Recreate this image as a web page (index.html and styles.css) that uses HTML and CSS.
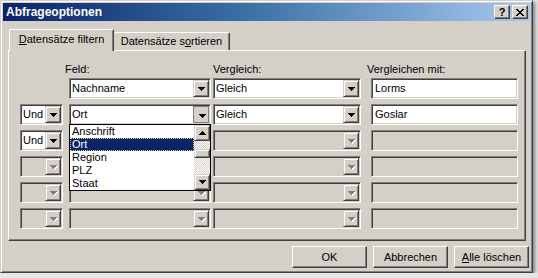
FILE: index.html
```html
<!DOCTYPE html>
<html>
<head>
    <title>Abfrageoptionen</title>
    <link rel="stylesheet" href="styles.css">
</head>
<body>
    <div class="window">
        <div class="titlebar">
            <span class="title">Abfrageoptionen</span>
            <div class="caption-btns">
                <span class="cap-btn">?</span>
                <span class="cap-btn">
                    <svg width="8" height="7" viewBox="0 0 8 7" shape-rendering="crispEdges"><path d="M0 0h2v1H0zM6 0h2v1H6zM1 1h2v1H1zM5 1h2v1H5zM2 2h4v1H2zM3 3h2v1H3zM2 4h4v1H2zM1 5h2v1H1zM5 5h2v1H5zM0 6h2v1H0zM6 6h2v1H6z" fill="#000"/></svg>
                </span>
            </div>
        </div>

        <div class="content">
            <div class="tabs">
                <div class="tab active"><u>D</u>atensätze filtern</div>
                <div class="tab">Datensätze s<u>o</u>rtieren</div>
            </div>

            <div class="panel">
                <div class="row labels">
                    <span class="c-und"></span>
                    <span class="c-feld lbl shift">Feld:</span>
                    <span class="c-verg lbl">Vergleich:</span>
                    <span class="c-wert lbl shift">Vergleichen mit:</span>
                </div>

                <!-- row 1 -->
                <div class="row">
                    <span class="c-und"></span>
                    <div class="combo c-feld"><span class="val">Nachname</span><span class="drop"><svg class="arrow" width="7" height="4" viewBox="0 0 7 4" shape-rendering="crispEdges"><path d="M0 0h7v1H0zM1 1h5v1H1zM2 2h3v1H2zM3 3h1v1H3z"/></svg></span></div>
                    <div class="combo c-verg"><span class="val">Gleich</span><span class="drop"><svg class="arrow" width="7" height="4" viewBox="0 0 7 4" shape-rendering="crispEdges"><path d="M0 0h7v1H0zM1 1h5v1H1zM2 2h3v1H2zM3 3h1v1H3z"/></svg></span></div>
                    <div class="field c-wert">Lorms</div>
                </div>

                <!-- row 2 -->
                <div class="row">
                    <div class="combo c-und"><span class="val">Und</span><span class="drop"><svg class="arrow" width="7" height="4" viewBox="0 0 7 4" shape-rendering="crispEdges"><path d="M0 0h7v1H0zM1 1h5v1H1zM2 2h3v1H2zM3 3h1v1H3z"/></svg></span></div>
                    <div class="combo c-feld open"><span class="val">Ort</span><span class="drop pressed"><svg class="arrow" width="7" height="4" viewBox="0 0 7 4" shape-rendering="crispEdges"><path d="M0 0h7v1H0zM1 1h5v1H1zM2 2h3v1H2zM3 3h1v1H3z"/></svg></span>
                        <div class="listbox">
                            <div class="items">
                                <div class="item">Anschrift</div>
                                <div class="item sel">Ort</div>
                                <div class="item">Region</div>
                                <div class="item">PLZ</div>
                                <div class="item">Staat</div>
                            </div>
                            <div class="scrollbar">
                                <span class="sb-btn"><svg width="7" height="4" viewBox="0 0 7 4" shape-rendering="crispEdges"><path d="M3 0h1v1H3zM2 1h3v1H2zM1 2h5v1H1zM0 3h7v1H0z"/></svg></span>
                                <span class="sb-track short"></span>
                                <span class="sb-thumb"></span>
                                <span class="sb-track"></span>
                                <span class="sb-btn"><svg width="7" height="4" viewBox="0 0 7 4" shape-rendering="crispEdges"><path d="M0 0h7v1H0zM1 1h5v1H1zM2 2h3v1H2zM3 3h1v1H3z"/></svg></span>
                            </div>
                        </div>
                    </div>
                    <div class="combo c-verg"><span class="val">Gleich</span><span class="drop"><svg class="arrow" width="7" height="4" viewBox="0 0 7 4" shape-rendering="crispEdges"><path d="M0 0h7v1H0zM1 1h5v1H1zM2 2h3v1H2zM3 3h1v1H3z"/></svg></span></div>
                    <div class="field c-wert">Goslar</div>
                </div>

                <!-- row 3 -->
                <div class="row">
                    <div class="combo c-und"><span class="val">Und</span><span class="drop"><svg class="arrow" width="7" height="4" viewBox="0 0 7 4" shape-rendering="crispEdges"><path d="M0 0h7v1H0zM1 1h5v1H1zM2 2h3v1H2zM3 3h1v1H3z"/></svg></span></div>
                    <div class="combo c-feld off"><span class="val"></span><span class="drop"><svg class="arrow" width="8" height="5" viewBox="0 0 8 5" shape-rendering="crispEdges"><path class="hl" d="M1 1h7v1H1zM2 2h5v1H2zM3 3h3v1H3zM4 4h1v1H4z"/><path d="M0 0h7v1H0zM1 1h5v1H1zM2 2h3v1H2zM3 3h1v1H3z"/></svg></span></div>
                    <div class="combo c-verg off"><span class="val"></span><span class="drop"><svg class="arrow" width="8" height="5" viewBox="0 0 8 5" shape-rendering="crispEdges"><path class="hl" d="M1 1h7v1H1zM2 2h5v1H2zM3 3h3v1H3zM4 4h1v1H4z"/><path d="M0 0h7v1H0zM1 1h5v1H1zM2 2h3v1H2zM3 3h1v1H3z"/></svg></span></div>
                    <div class="field c-wert off"></div>
                </div>

                <!-- row 4 -->
                <div class="row">
                    <div class="combo c-und off"><span class="val"></span><span class="drop"><svg class="arrow" width="8" height="5" viewBox="0 0 8 5" shape-rendering="crispEdges"><path class="hl" d="M1 1h7v1H1zM2 2h5v1H2zM3 3h3v1H3zM4 4h1v1H4z"/><path d="M0 0h7v1H0zM1 1h5v1H1zM2 2h3v1H2zM3 3h1v1H3z"/></svg></span></div>
                    <div class="combo c-feld off"><span class="val"></span><span class="drop"><svg class="arrow" width="8" height="5" viewBox="0 0 8 5" shape-rendering="crispEdges"><path class="hl" d="M1 1h7v1H1zM2 2h5v1H2zM3 3h3v1H3zM4 4h1v1H4z"/><path d="M0 0h7v1H0zM1 1h5v1H1zM2 2h3v1H2zM3 3h1v1H3z"/></svg></span></div>
                    <div class="combo c-verg off"><span class="val"></span><span class="drop"><svg class="arrow" width="8" height="5" viewBox="0 0 8 5" shape-rendering="crispEdges"><path class="hl" d="M1 1h7v1H1zM2 2h5v1H2zM3 3h3v1H3zM4 4h1v1H4z"/><path d="M0 0h7v1H0zM1 1h5v1H1zM2 2h3v1H2zM3 3h1v1H3z"/></svg></span></div>
                    <div class="field c-wert off"></div>
                </div>

                <!-- row 5 -->
                <div class="row">
                    <div class="combo c-und off"><span class="val"></span><span class="drop"><svg class="arrow" width="8" height="5" viewBox="0 0 8 5" shape-rendering="crispEdges"><path class="hl" d="M1 1h7v1H1zM2 2h5v1H2zM3 3h3v1H3zM4 4h1v1H4z"/><path d="M0 0h7v1H0zM1 1h5v1H1zM2 2h3v1H2zM3 3h1v1H3z"/></svg></span></div>
                    <div class="combo c-feld off"><span class="val"></span><span class="drop"><svg class="arrow" width="8" height="5" viewBox="0 0 8 5" shape-rendering="crispEdges"><path class="hl" d="M1 1h7v1H1zM2 2h5v1H2zM3 3h3v1H3zM4 4h1v1H4z"/><path d="M0 0h7v1H0zM1 1h5v1H1zM2 2h3v1H2zM3 3h1v1H3z"/></svg></span></div>
                    <div class="combo c-verg off"><span class="val"></span><span class="drop"><svg class="arrow" width="8" height="5" viewBox="0 0 8 5" shape-rendering="crispEdges"><path class="hl" d="M1 1h7v1H1zM2 2h5v1H2zM3 3h3v1H3zM4 4h1v1H4z"/><path d="M0 0h7v1H0zM1 1h5v1H1zM2 2h3v1H2zM3 3h1v1H3z"/></svg></span></div>
                    <div class="field c-wert off"></div>
                </div>

                <!-- row 6 -->
                <div class="row">
                    <div class="combo c-und off"><span class="val"></span><span class="drop"><svg class="arrow" width="8" height="5" viewBox="0 0 8 5" shape-rendering="crispEdges"><path class="hl" d="M1 1h7v1H1zM2 2h5v1H2zM3 3h3v1H3zM4 4h1v1H4z"/><path d="M0 0h7v1H0zM1 1h5v1H1zM2 2h3v1H2zM3 3h1v1H3z"/></svg></span></div>
                    <div class="combo c-feld off"><span class="val"></span><span class="drop"><svg class="arrow" width="8" height="5" viewBox="0 0 8 5" shape-rendering="crispEdges"><path class="hl" d="M1 1h7v1H1zM2 2h5v1H2zM3 3h3v1H3zM4 4h1v1H4z"/><path d="M0 0h7v1H0zM1 1h5v1H1zM2 2h3v1H2zM3 3h1v1H3z"/></svg></span></div>
                    <div class="combo c-verg off"><span class="val"></span><span class="drop"><svg class="arrow" width="8" height="5" viewBox="0 0 8 5" shape-rendering="crispEdges"><path class="hl" d="M1 1h7v1H1zM2 2h5v1H2zM3 3h3v1H3zM4 4h1v1H4z"/><path d="M0 0h7v1H0zM1 1h5v1H1zM2 2h3v1H2zM3 3h1v1H3z"/></svg></span></div>
                    <div class="field c-wert off"></div>
                </div>
            </div>

            <div class="actions">
                <button class="btn">OK</button>
                <button class="btn">Abbrechen</button>
                <button class="btn"><u>A</u>lle löschen</button>
            </div>
        </div>
    </div>
</body>
</html>
```

FILE: styles.css
```css
body {
    margin: 0;
    background-color: #e6e6e6;
    font-family: "Liberation Sans", Arial, sans-serif;
    font-size: 11px;
    color: #000;
}
.window {
    box-sizing: border-box;
    width: 533px;
    height: 273px;
    padding: 2px;
    background-color: #d4d0c8;
    border: 1px solid;
    border-color: #d4d0c8 #404040 #404040 #d4d0c8;
    box-shadow: inset 1px 1px #fff, inset -1px -1px #808080, 2px 2px 4px rgba(0, 0, 0, 0.45);
}
.titlebar {
    height: 18px;
    display: flex;
    align-items: center;
    justify-content: space-between;
    padding: 0 2px 0 3px;
    background: linear-gradient(to right, #0a246a, #3a6ea5 45%, #a6caf0);
}
.title {
    color: #fff;
    font-weight: bold;
    font-size: 12px;
}
.caption-btns {
    display: flex;
    gap: 2px;
}
.cap-btn {
    box-sizing: border-box;
    width: 16px;
    height: 14px;
    display: flex;
    align-items: center;
    justify-content: center;
    background-color: #d4d0c8;
    border: 1px solid;
    border-color: #fff #404040 #404040 #fff;
    box-shadow: inset -1px -1px #808080;
    font-weight: bold;
    font-size: 11px;
    line-height: 12px;
}
.content {
    padding: 8px 0 0 5px;
}
.tabs {
    display: flex;
    align-items: flex-end;
    height: 21px;
    padding-left: 1px;
}
.tab {
    box-sizing: border-box;
    height: 18px;
    line-height: 16px;
    text-align: center;
    background-color: #d4d0c8;
    border-top: 1px solid #fff;
    border-left: 1px solid #fff;
    border-right: 1px solid #404040;
    box-shadow: inset -1px 0 #808080;
    border-radius: 2px 2px 0 0;
}
.tab:nth-child(1) {
    width: 105px;
}
.tab:nth-child(2) {
    width: 116px;
    border-left: none;
}
.tab.active {
    position: relative;
    z-index: 1;
    height: 22px;
    margin-bottom: -1px;
    line-height: 19px;
}
.panel {
    box-sizing: border-box;
    width: 518px;
    height: 191px;
    padding: 12px 0 0 11px;
    border: 1px solid;
    border-color: #fff #404040 #404040 #fff;
    box-shadow: inset -1px -1px #808080;
}
.row {
    display: flex;
    height: 21px;
    margin-bottom: 5px;
}
.row.labels {
    height: 14px;
    margin-bottom: 1px;
    line-height: 13px;
}
.c-und { width: 43px; flex: none; }
.c-feld { width: 142px; flex: none; margin-left: 6px; }
.c-verg { width: 148px; flex: none; margin-left: 2px; }
.c-wert { width: 147px; flex: none; margin-left: 10px; }
.lbl.shift {
    text-indent: -4px;
}
.combo, .field {
    box-sizing: border-box;
    height: 21px;
    padding: 1px;
    background-color: #fff;
    border: 1px solid;
    border-color: #808080 #fff #fff #808080;
    box-shadow: inset 1px 1px #404040, inset -1px -1px #d4d0c8;
}
.combo {
    display: flex;
}
.combo.open {
    position: relative;
}
.val {
    flex: 1;
    padding-left: 1px;
    line-height: 17px;
    white-space: nowrap;
    overflow: hidden;
}
.field {
    padding-left: 3px;
    line-height: 17px;
}
.off {
    background-color: #d4d0c8;
}
.drop {
    box-sizing: border-box;
    width: 16px;
    height: 17px;
    flex: none;
    display: flex;
    align-items: center;
    justify-content: center;
    background-color: #d4d0c8;
    border: 1px solid;
    border-color: #d4d0c8 #404040 #404040 #d4d0c8;
    box-shadow: inset 1px 1px #fff, inset -1px -1px #808080;
}
.drop.pressed {
    border-color: #808080;
    box-shadow: none;
    padding: 2px 0 0 2px;
}
.arrow path { fill: #000; }
.off .arrow path { fill: #808080; }
.off .arrow path.hl { fill: #fff; }
.off .arrow { margin: 1px 0 0 1px; }

.listbox {
    position: absolute;
    z-index: 2;
    top: 19px;
    left: -1px;
    box-sizing: border-box;
    width: 142px;
    height: 67px;
    display: flex;
    background-color: #fff;
    border: 1px solid #000;
}
.items {
    flex: 1;
}
.item {
    height: 13px;
    line-height: 13px;
    padding-left: 2px;
}
.item.sel {
    background-color: #0a246a;
    color: #fff;
    outline: 1px dotted #e8d080;
    outline-offset: -1px;
}
.scrollbar {
    width: 16px;
    display: flex;
    flex-direction: column;
}
.sb-btn, .sb-thumb {
    box-sizing: border-box;
    flex: none;
    display: flex;
    align-items: center;
    justify-content: center;
    background-color: #d4d0c8;
    border: 1px solid;
    border-color: #d4d0c8 #404040 #404040 #d4d0c8;
    box-shadow: inset 1px 1px #fff, inset -1px -1px #808080;
}
.sb-btn {
    height: 16px;
}
.sb-thumb {
    height: 9px;
}
.sb-track {
    flex: 1;
    background: conic-gradient(#d4d0c8 25%, #fff 0 50%, #d4d0c8 0 75%, #fff 0) 0 0 / 2px 2px;
}
.sb-track.short {
    flex: none;
    height: 8px;
}
.actions {
    display: flex;
    justify-content: flex-end;
    gap: 6px;
    margin-top: 5px;
    padding-right: 1px;
}
.btn {
    box-sizing: border-box;
    width: 75px;
    height: 22px;
    padding: 0;
    font-family: inherit;
    font-size: 11px;
    color: #000;
    background-color: #d4d0c8;
    border: 1px solid;
    border-color: #fff #404040 #404040 #fff;
    box-shadow: inset -1px -1px #808080, inset 1px 1px #d4d0c8;
}
```
